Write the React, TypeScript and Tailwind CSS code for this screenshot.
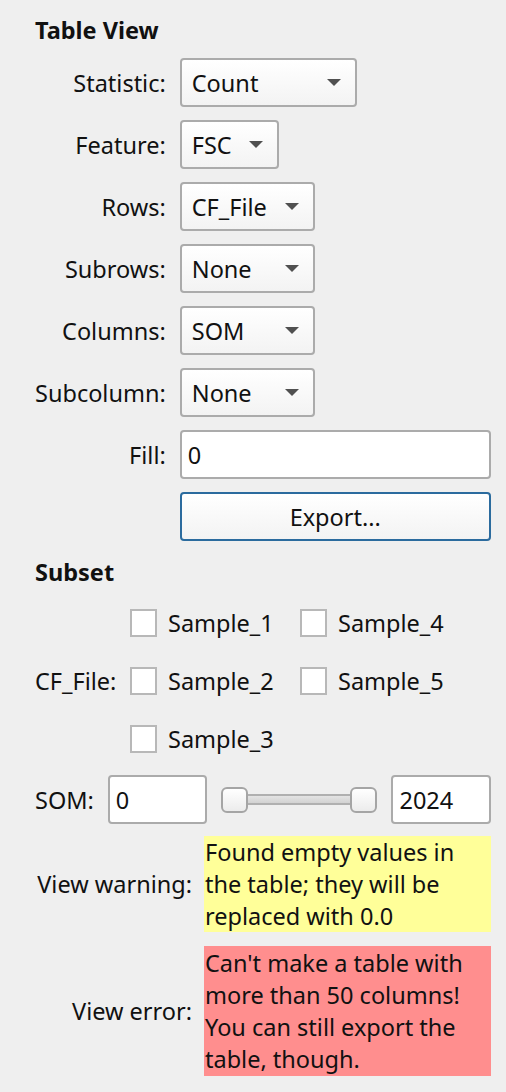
import React from "react";

const Arrow: React.FC = () => (
  <svg width="14" height="8" viewBox="0 0 14 8" className="shrink-0">
    <path d="M0 0 L14 0 L7 7 Z" fill="#505050" />
  </svg>
);

interface ComboProps {
  value: string;
  width: string;
}

const Combo: React.FC<ComboProps> = ({ value, width }) => (
  <div
    className={`${width} h-[49px] flex items-center justify-between pl-[10px] pr-[14px] rounded-[4px] border-2 border-[#ababab] bg-gradient-to-b from-white to-[#f3f3f3]`}
  >
    <span>{value}</span>
    <Arrow />
  </div>
);

const TextBox: React.FC<{ value: string; className?: string }> = ({
  value,
  className,
}) => (
  <div
    className={`h-[49px] flex items-center pl-[6px] rounded-[4px] border-2 border-[#ababab] bg-white ${className ?? ""}`}
  >
    {value}
  </div>
);

const Check: React.FC<{ label: string }> = ({ label }) => (
  <div className="flex items-center gap-[11px] h-[44px]">
    <div className="w-[27px] h-[28px] border-2 border-[#b8b8b8] bg-white" />
    <span>{label}</span>
  </div>
);

const rows: [string, string, string][] = [
  ["Statistic:", "Count", "w-[177px]"],
  ["Feature:", "FSC", "w-[99px]"],
  ["Rows:", "CF_File", "w-[135px]"],
  ["Subrows:", "None", "w-[135px]"],
  ["Columns:", "SOM", "w-[135px]"],
  ["Subcolumn:", "None", "w-[135px]"],
];

const App: React.FC = () => {
  return (
    <div
      className="min-h-screen w-[506px] bg-[#efefef] text-[23.5px] leading-[32px] text-[#111] pl-[35px] pr-[15px] pt-[14px]"
      style={{ fontFamily: '"Noto Sans", sans-serif' }}
    >
      <div className="font-bold h-[32px]">Table View</div>

      <div className="grid grid-cols-[auto_1fr] gap-x-[14px] gap-y-[13px] mt-[12px]">
        {rows.map(([label, value, w]) => (
          <React.Fragment key={label}>
            <div className="text-right self-center whitespace-nowrap">{label}</div>
            <Combo value={value} width={w} />
          </React.Fragment>
        ))}
        <div className="text-right self-center">Fill:</div>
        <TextBox value="0" className="w-[311px]" />
        <div />
        <div className="w-[311px] h-[49px] flex items-center justify-center rounded-[4px] border-2 border-[#2b6b9e] bg-gradient-to-b from-white to-[#f3f3f3]">
          Export...
        </div>
      </div>

      <div className="font-bold h-[32px] mt-[15px]">Subset</div>

      <div className="flex mt-[13px]">
        <div className="w-[95px] flex items-center">CF_File:</div>
        <div className="grid grid-cols-[170px_auto] gap-y-[14px]">
          <Check label="Sample_1" />
          <Check label="Sample_4" />
          <Check label="Sample_2" />
          <Check label="Sample_5" />
          <Check label="Sample_3" />
        </div>
      </div>

      <div className="flex items-center mt-[14px]">
        <div className="w-[73px]">SOM:</div>
        <TextBox value="0" className="w-[100px]" />
        <div className="w-[157px] ml-[14px] mr-[14px] flex items-center">
          <div className="w-[27px] h-[26px] rounded-[6px] border-2 border-[#a5a5a5] bg-gradient-to-b from-white to-[#ececec] shrink-0" />
          <div className="flex-1 h-[11px] border-y-2 border-[#b0b0b0] bg-gradient-to-b from-[#e4e4e4] to-[#d2d2d2]" />
          <div className="w-[27px] h-[26px] rounded-[6px] border-2 border-[#a5a5a5] bg-gradient-to-b from-white to-[#ececec] shrink-0" />
        </div>
        <TextBox value="2024" className="w-[100px]" />
      </div>

      <div className="grid grid-cols-[157px_1fr] gap-x-[12px] gap-y-[14px] mt-[12px]">
        <div className="text-right self-center whitespace-nowrap">View warning:</div>
        <div className="bg-[#ffff99] px-[1px] py-[0px] whitespace-nowrap">
          Found empty values in
          <br />
          the table; they will be
          <br />
          replaced with 0.0
        </div>
        <div className="text-right self-center whitespace-nowrap">View error:</div>
        <div className="bg-[#ff8e8e] px-[1px] py-[1px] whitespace-nowrap">
          Can't make a table with
          <br />
          more than 50 columns!
          <br />
          You can still export the
          <br />
          table, though.
        </div>
      </div>
    </div>
  );
};

export default App;
